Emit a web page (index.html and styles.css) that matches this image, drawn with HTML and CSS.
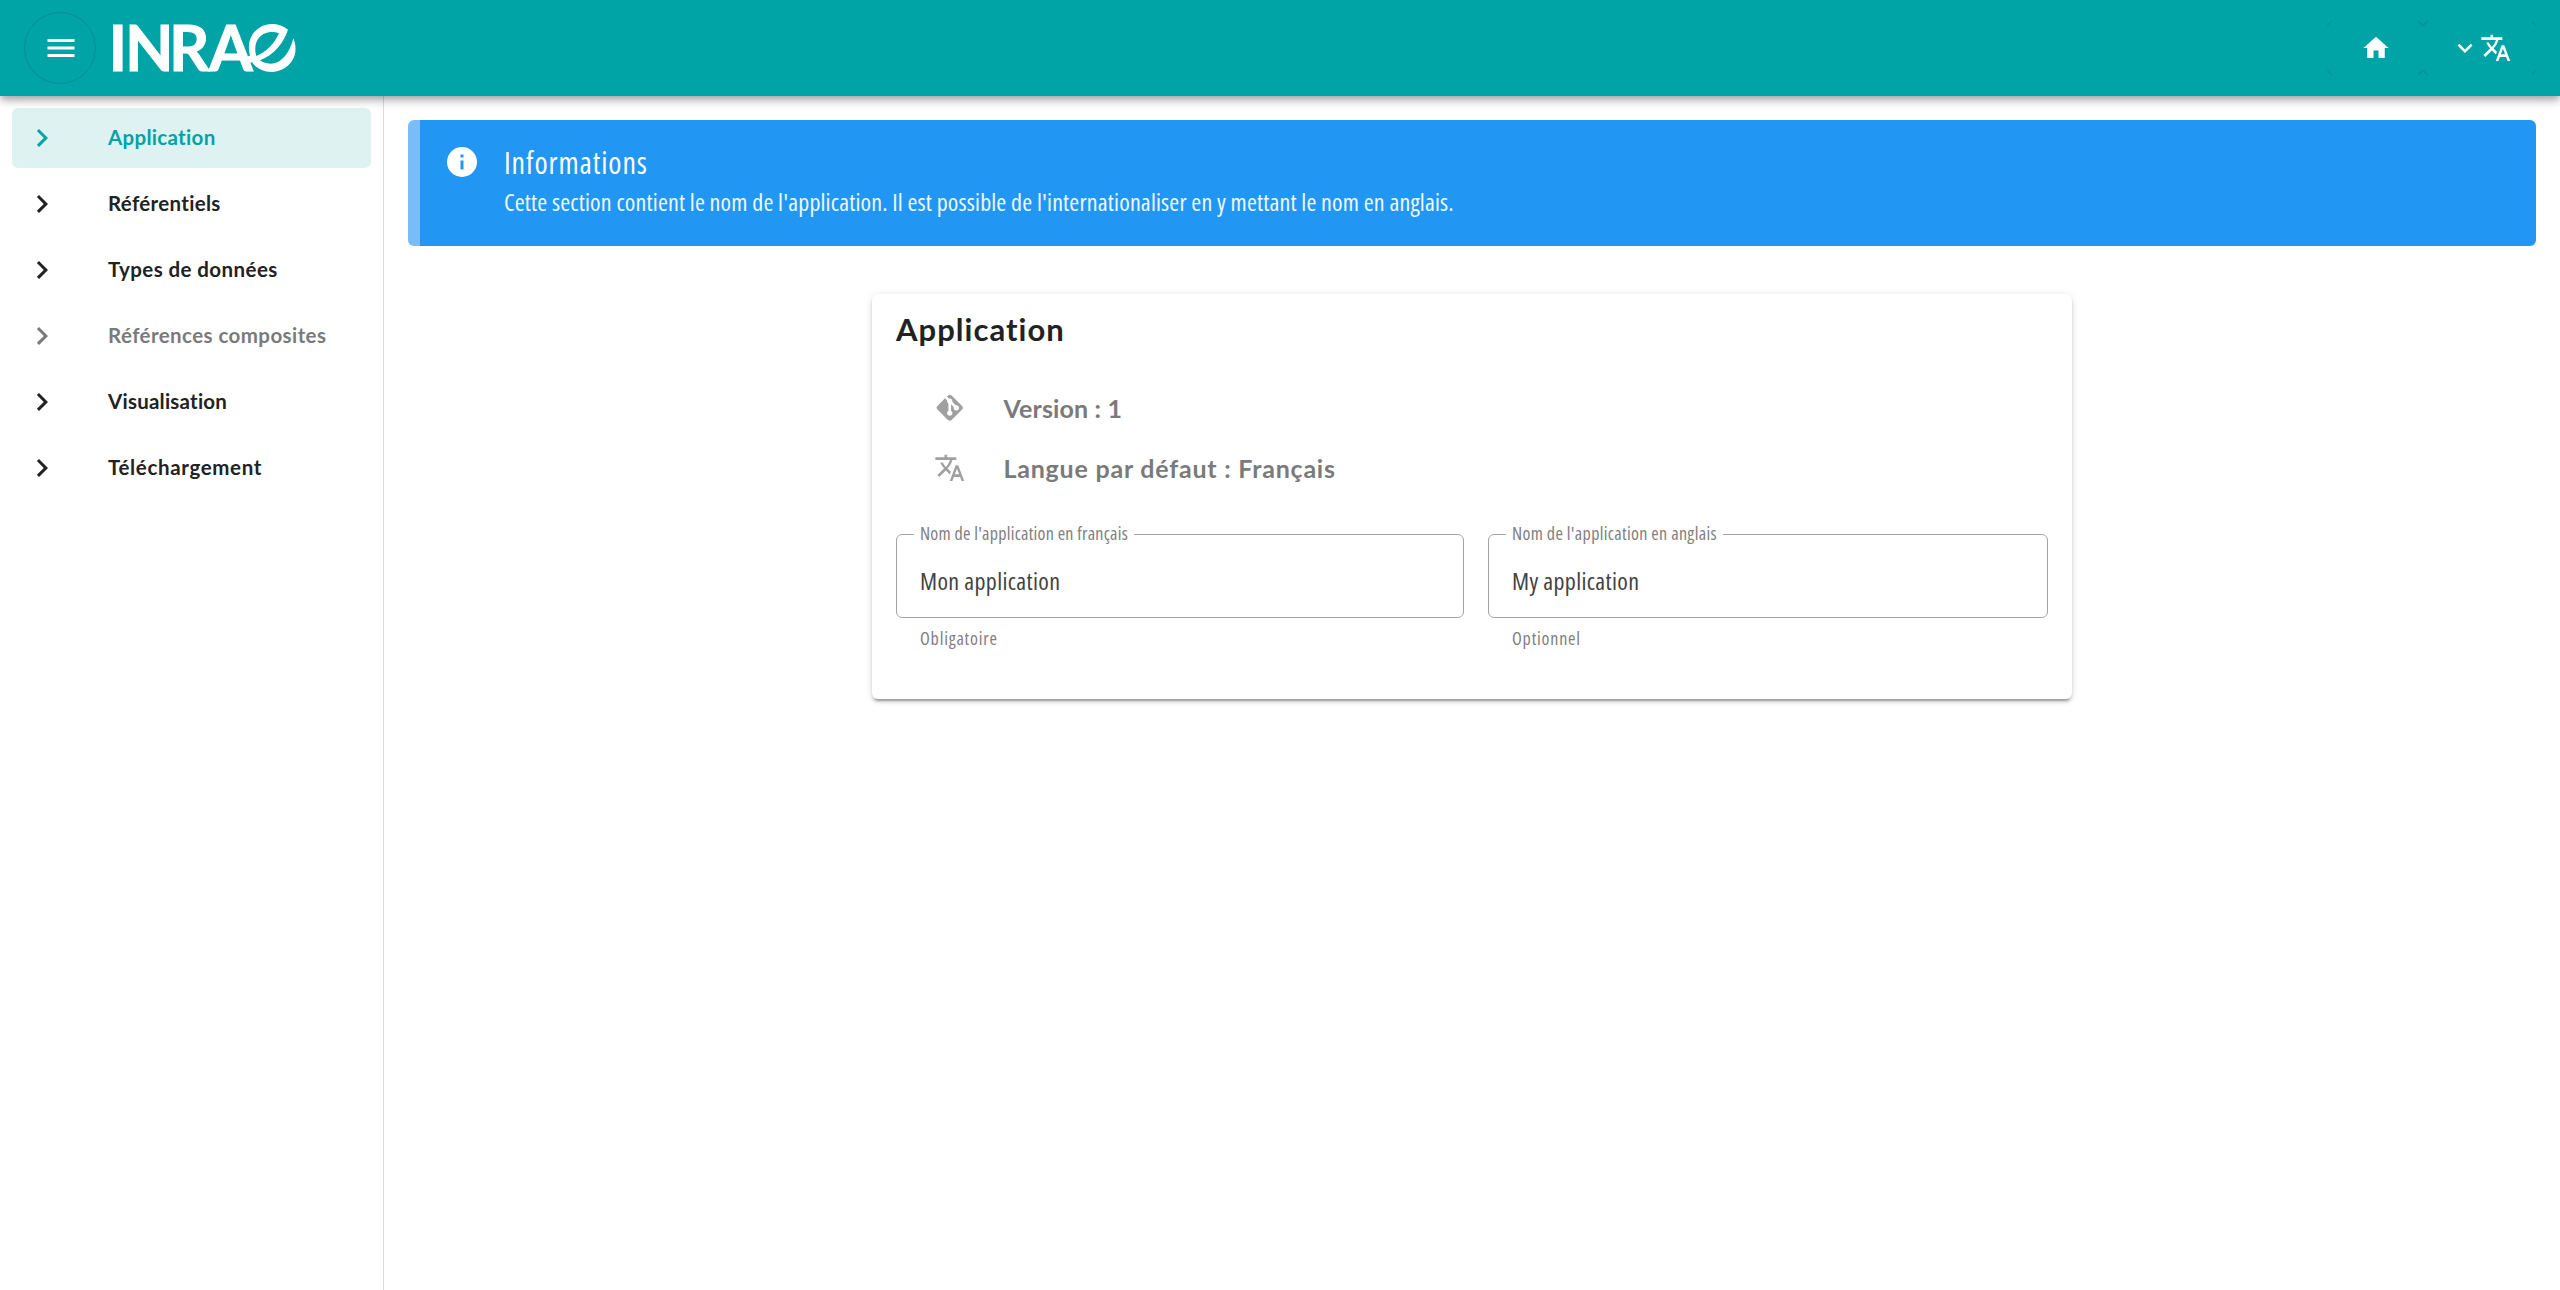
FILE: index.html
```
<!DOCTYPE html>
<html lang="fr">
<head>
<meta charset="utf-8">
<title>INRAE</title>
<link rel="stylesheet" href="styles.css">
</head>
<body>
<svg width="0" height="0" class="sprite">
  <symbol id="chevron" viewBox="0 0 24 24"><path d="M8.59,16.58L13.17,12L8.59,7.41L10,6L16,12L10,18L8.59,16.58Z"/></symbol>
  <symbol id="translate" viewBox="0 0 24 24"><path d="M12.87,15.07L10.33,12.56L10.36,12.53C12.1,10.59 13.34,8.36 14.07,6H17V4H10V2H8V4H1V6H12.17C11.5,7.92 10.44,9.75 9,11.35C8.07,10.32 7.3,9.19 6.69,8H4.69C5.42,9.63 6.42,11.17 7.67,12.56L2.58,17.58L4,19L9,14L12.11,17.11L12.87,15.07M18.5,10H16.5L12,22H14L15.12,19H19.87L21,22H23L18.5,10M15.88,17L17.5,12.67L19.12,17H15.88Z"/></symbol>
</svg>
<header class="toolbar">
  <button class="menu-button" aria-label="Menu"><svg class="icon-36" viewBox="0 0 24 24"><path d="M3,6H21V8H3V6M3,11H21V13H3V11M3,16H21V18H3V16Z"/></svg></button>
  <svg class="logo" viewBox="-8 -8 208 80" aria-label="INRAE">
    <text class="logo-text" y="54.6" x="-1.5 15 59 99">INRA</text>
    <g transform="scale(.33333)"><path fill-rule="evenodd" d="M534 41C510 21 474 18 448 35C420 54 411 85 420 119L402 124L404 145L426 139C446 168 486 175 518 160C552 143 566 105 550 67C544 91 532 120 510 134C492 146 468 146 450 133C492 116 519 84 534 41ZM439 120C428 84 446 53 477 49C487 47 497 48 507 52C493 83 469 109 439 120Z"/></g>
  </svg>
  <nav class="toolbar-actions">
    <button class="tool-button tool-button--home" aria-label="Accueil"><svg class="icon-30" viewBox="0 0 24 24"><path d="M10,20V14H14V20H19V12H22L12,3L2,12H5V20H10Z"/></svg></button>
    <button class="tool-button tool-button--lang" aria-label="Langue"><svg class="icon-30" viewBox="0 0 24 24"><path d="M7.41,8.58L12,13.17L16.59,8.58L18,10L12,16L6,10L7.41,8.58Z"/></svg><svg class="icon-31"><use href="#translate"/></svg></button>
  </nav>
</header>
<div class="layout">
  <aside class="sidebar">
    <a class="nav-item nav-item--active"><svg class="icon-36"><use href="#chevron"/></svg><span>Application</span></a>
    <a class="nav-item"><svg class="icon-36"><use href="#chevron"/></svg><span>Référentiels</span></a>
    <a class="nav-item nav-item--wide"><svg class="icon-36"><use href="#chevron"/></svg><span>Types de données</span></a>
    <a class="nav-item nav-item--wide nav-item--disabled"><svg class="icon-36"><use href="#chevron"/></svg><span>Références composites</span></a>
    <a class="nav-item nav-item--tight"><svg class="icon-36"><use href="#chevron"/></svg><span>Visualisation</span></a>
    <a class="nav-item nav-item--wider"><svg class="icon-36"><use href="#chevron"/></svg><span>Téléchargement</span></a>
  </aside>
  <main class="content">
    <section class="alert">
      <svg class="icon-36" viewBox="0 0 24 24"><path d="M13,9H11V7H13M13,17H11V11H13M12,2A10,10 0 0,0 2,12A10,10 0 0,0 12,22A10,10 0 0,0 22,12A10,10 0 0,0 12,2Z"/></svg>
      <div>
        <h2 class="alert-title">Informations</h2>
        <p class="alert-text">Cette section contient le nom de l'application. Il est possible de l'internationaliser en y mettant le nom en anglais.</p>
      </div>
    </section>
    <section class="card">
      <h1 class="card-title">Application</h1>
      <div class="info-row"><svg class="icon-31" viewBox="0 0 24 24"><path d="M2.6,10.59L8.38,4.8L10.07,6.5C9.83,7.35 10.22,8.28 11,8.73V14.27C10.4,14.61 10,15.26 10,16A2,2 0 0,0 12,18A2,2 0 0,0 14,16C14,15.26 13.6,14.61 13,14.27V9.41L15.07,11.5C15,11.65 15,11.82 15,12A2,2 0 0,0 17,14A2,2 0 0,0 19,12A2,2 0 0,0 17,10C16.82,10 16.65,10 16.5,10.07L13.93,7.5C14.19,6.57 13.71,5.55 12.78,5.16C12.35,5 11.9,4.96 11.5,5.07L9.8,3.38L10.59,2.6C11.37,1.81 12.63,1.81 13.41,2.6L21.4,10.59C22.19,11.37 22.19,12.63 21.4,13.41L13.41,21.4C12.63,22.19 11.37,22.19 10.59,21.4L2.6,13.41C1.81,12.63 1.81,11.37 2.6,10.59Z"/></svg><span class="info-version">Version : 1</span></div>
      <div class="info-row"><svg class="icon-31"><use href="#translate"/></svg><span>Langue par défaut : Français</span></div>
      <div class="fields">
        <div class="field">
          <div class="field-box"><span class="field-label">Nom de l'application en français</span><span class="field-value">Mon application</span></div>
          <div class="field-hint">Obligatoire</div>
        </div>
        <div class="field">
          <div class="field-box"><span class="field-label field-label--en">Nom de l'application en anglais</span><span class="field-value">My application</span></div>
          <div class="field-hint">Optionnel</div>
        </div>
      </div>
    </section>
  </main>
</div>
</body>
</html>
```
FILE: styles.css
```
* { box-sizing: border-box; }
body {
  margin: 0;
  height: 1290px;
  overflow: hidden;
  display: flex;
  flex-direction: column;
  background: #fff;
  color: #222;
  font-family: Lato, "Liberation Sans", sans-serif;
}
h1, h2, p { margin: 0; }
svg { display: block; flex: none; fill: currentColor; }
button { background: none; color: inherit; padding: 0; border: 0; }
.sprite { position: absolute; }
.icon-36 { width: 36px; height: 36px; }
.icon-30 { width: 30px; height: 30px; }
.icon-31 { width: 31.5px; height: 31.5px; }

.toolbar {
  position: relative;
  z-index: 2;
  flex: none;
  height: 96px;
  padding: 0 24px;
  display: flex;
  align-items: center;
  background: #00a3a6;
  color: #fff;
  box-shadow: 0 3px 6px -1.5px rgba(0,0,0,.2), 0 6px 7.5px rgba(0,0,0,.14), 0 1.5px 15px rgba(0,0,0,.12);
}
.menu-button {
  width: 72px;
  height: 72px;
  display: flex;
  align-items: center;
  justify-content: center;
  padding-left: 2px;
  border: 1px solid rgba(0,0,0,.13);
  border-radius: 50%;
}
.logo { width: 208px; height: 80px; margin-left: 6px; overflow: visible; }
.logo-text { font: 700 63px/1 Lato, sans-serif; stroke: currentColor; stroke-width: .9px; }
.toolbar-actions { display: flex; margin-left: auto; }
.tool-button {
  height: 54px;
  display: flex;
  align-items: center;
  justify-content: center;
  border: 1px solid rgba(0,0,0,.18);
  border-radius: 6px;
  -webkit-mask: linear-gradient(#000 0 0) 0 0/5px 5px no-repeat, linear-gradient(#000 0 0) 100% 0/5px 5px no-repeat, linear-gradient(#000 0 0) 0 100%/5px 5px no-repeat, linear-gradient(#000 0 0) 100% 100%/5px 5px no-repeat, linear-gradient(#000 0 0) 50% 50%/calc(100% - 10px) calc(100% - 10px) no-repeat;
}
.tool-button--home { width: 96px; padding-left: 2px; }
.tool-button--lang { width: 113px; padding-left: 2px; }

.layout { flex: 1; display: flex; }
.sidebar {
  width: 384px;
  padding: 12px 12px 0;
  display: flex;
  flex-direction: column;
  gap: 6px;
  border-right: 1px solid #dcdcdc;
}
.nav-item {
  height: 60px;
  padding-left: 12px;
  display: flex;
  align-items: center;
  gap: 48px;
  border-radius: 6px;
  font-size: 20.5px;
  font-weight: 700;
  letter-spacing: .31px;
}
.nav-item span { padding-bottom: 2px; }
.nav-item--active { background: #def2f1; color: #00a3a6; }
.nav-item--disabled { color: #7a7a7a; }
.nav-item--wide { letter-spacing: .42px; }
.nav-item--wider { letter-spacing: .65px; }
.nav-item--tight { letter-spacing: .23px; }

.content { flex: 1; padding: 24px; }
.alert {
  height: 126px;
  padding: 24px;
  display: flex;
  gap: 24px;
  border-left: 12px solid #79bdf8;
  border-radius: 6px;
  background: #2196f3;
  background-clip: padding-box;
  color: #fff;
  font-family: "Open Sans", "Liberation Sans", sans-serif;
  font-stretch: condensed;
}
.alert-title { font-size: 30px; font-weight: 400; line-height: 38px; letter-spacing: .9px; }
.alert-text { font-size: 24px; line-height: 39px; letter-spacing: .16px; color: #f0f8fe; }

.card {
  width: 1200px;
  height: 405px;
  margin: 48px auto 0;
  padding: 12px 24px;
  border-radius: 6px;
  background: #fff;
  box-shadow: 0 4.5px 1.5px -3px rgba(0,0,0,.2), 0 3px 3px rgba(0,0,0,.14), 0 1.5px 7.5px rgba(0,0,0,.12);
}
.card-title { font-size: 31px; font-weight: 700; line-height: 46px; letter-spacing: 1.04px; }
.info-row {
  height: 60px;
  padding-left: 38px;
  display: flex;
  align-items: center;
  gap: 38px;
  font-size: 25px;
  font-weight: 700;
  letter-spacing: .78px;
  color: #7a7a7a;
}
.info-row span { padding-bottom: 1px; }
.card-title + .info-row { margin-top: 26px; }
.info-row svg { color: #a0a0a0; }
.info-row .info-version { letter-spacing: .15px; }
.fields {
  display: grid;
  grid-template-columns: 568px 560px;
  gap: 24px;
  margin-top: 36px;
  font-family: "Open Sans", "Liberation Sans", sans-serif;
  font-stretch: condensed;
}
.field-box {
  position: relative;
  height: 84px;
  padding: 9px 23px 0;
  display: flex;
  align-items: center;
  border: 1px solid #a3a3a3;
  border-radius: 6px;
}
.field-label {
  position: absolute;
  left: 17px;
  top: -14px;
  padding: 0 6px;
  background: #fff;
  color: #808080;
  font-size: 18px;
  line-height: 24px;
  letter-spacing: .25px;
}
.field-label--en { letter-spacing: .33px; }
.field-value { font-size: 24px; letter-spacing: .35px; color: #424242; }
.field-hint { padding-left: 24px; margin-top: 7.5px; font-size: 18px; line-height: 24px; letter-spacing: .8px; color: #808080; }
```
